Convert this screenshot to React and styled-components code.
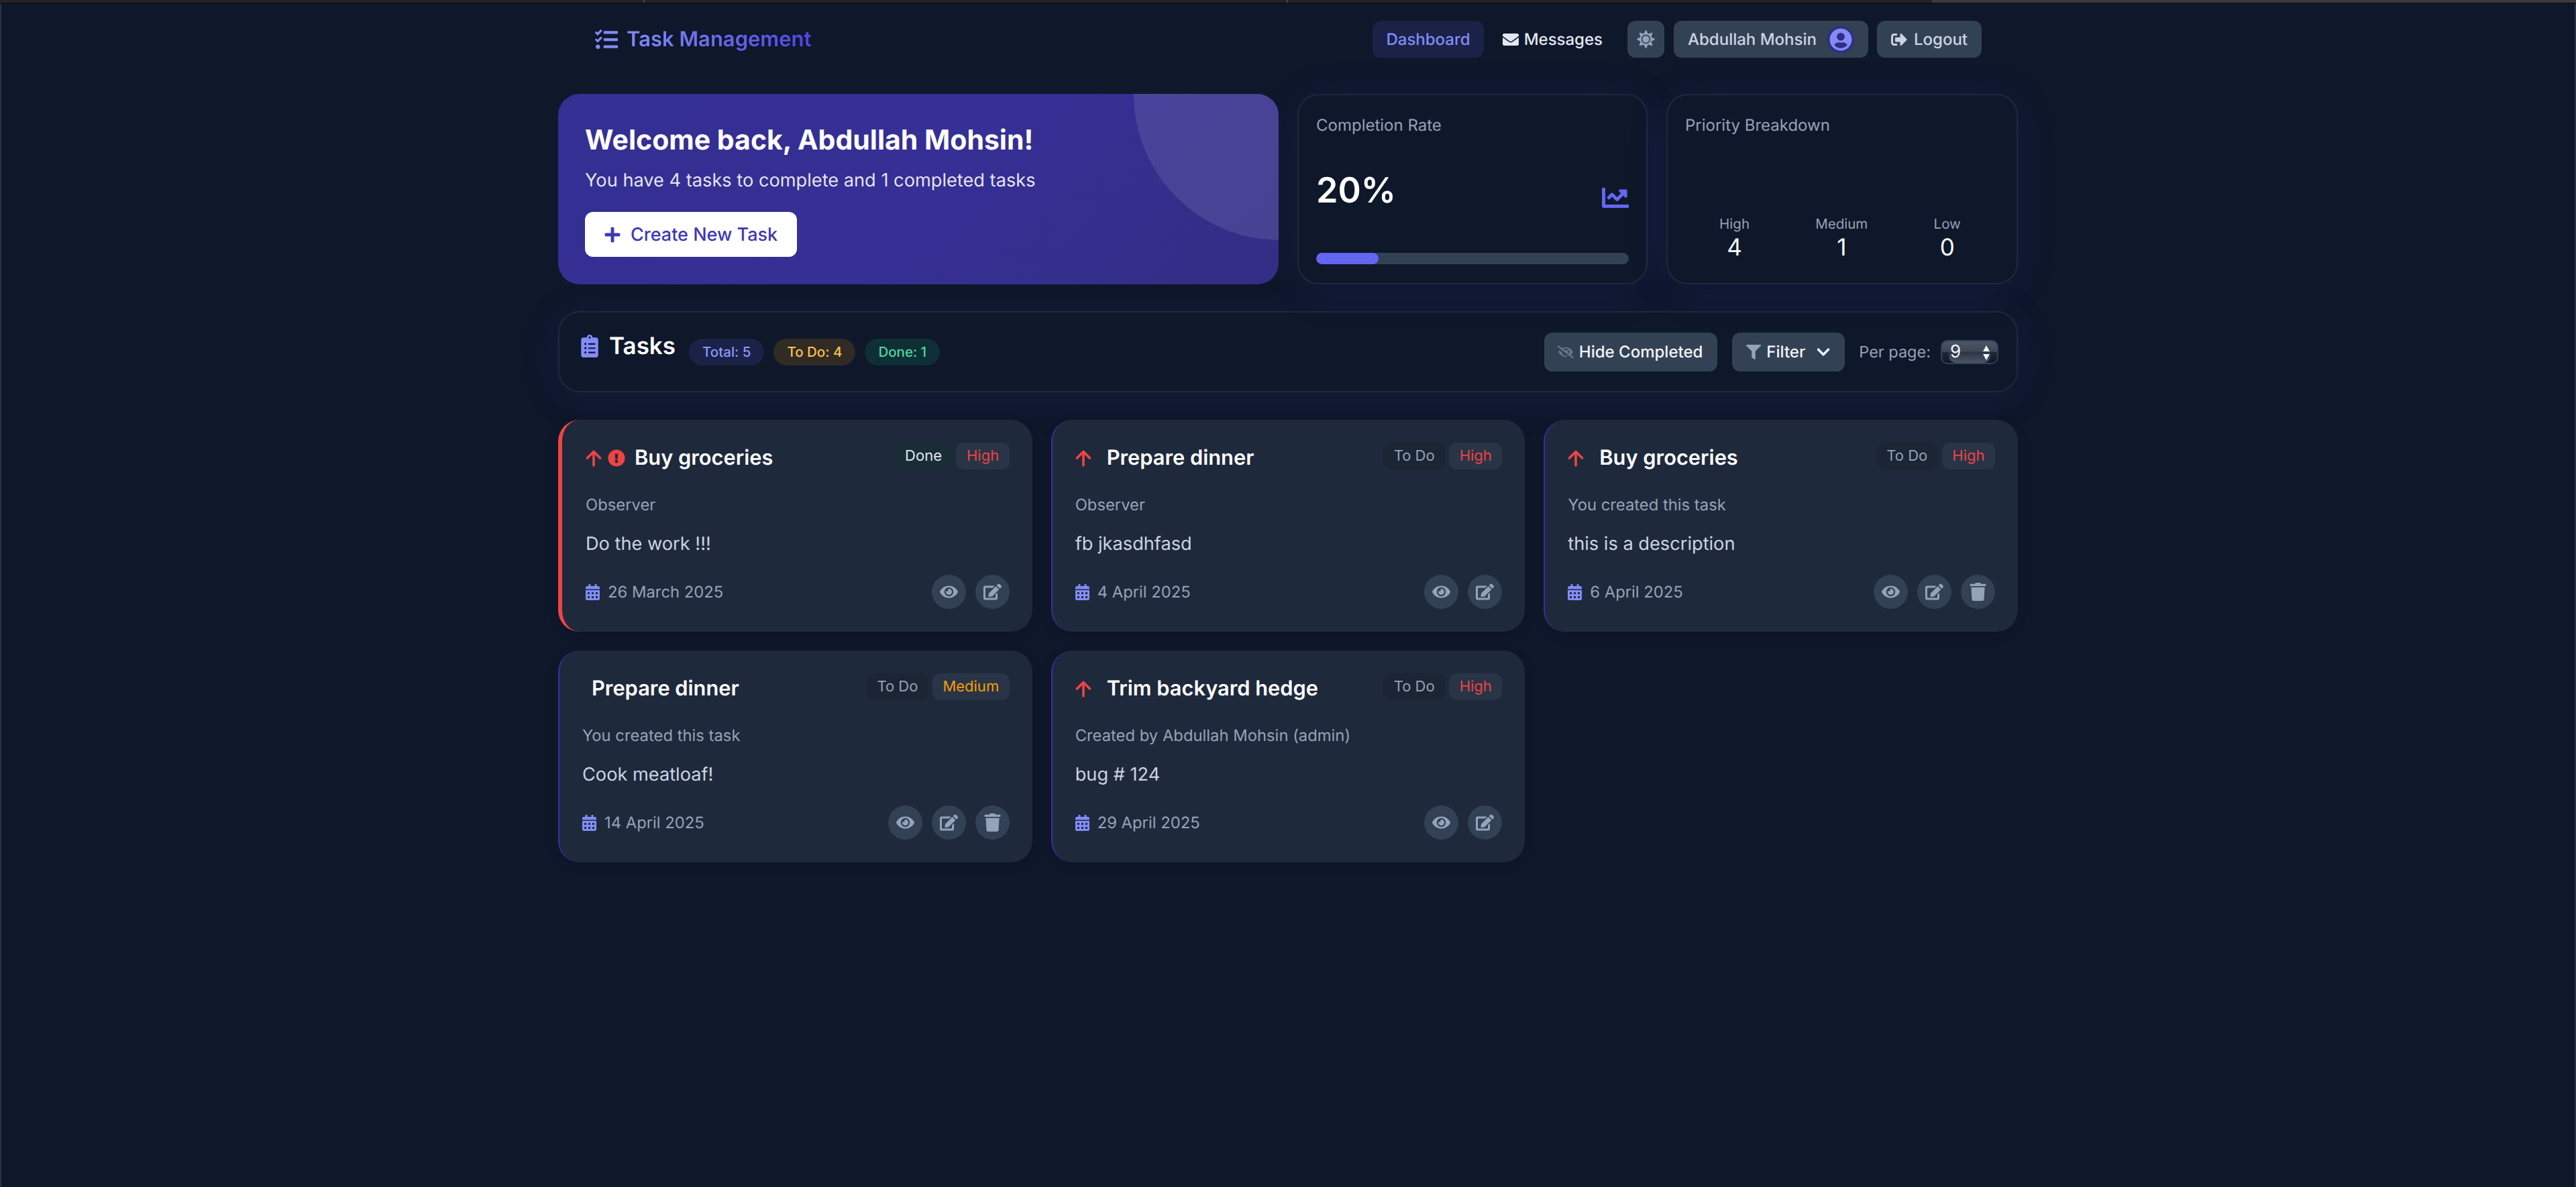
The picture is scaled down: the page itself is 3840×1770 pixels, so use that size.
import React from 'react';
import styled, { createGlobalStyle } from 'styled-components';
import {
  FaTasks, FaEnvelope, FaSun, FaUserCircle, FaSignOutAlt, FaPlus, FaChartLine,
  FaClipboardList, FaEyeSlash, FaFilter, FaChevronDown, FaExclamationCircle,
  FaCalendarAlt, FaEye, FaEdit, FaTrash,
} from 'react-icons/fa';

const Global = createGlobalStyle`
  html, body { margin: 0; padding: 0; background: #0f172a; }
  body { font-family: Inter, "Noto Sans", "Liberation Sans", sans-serif; color: #f8fafc; -webkit-font-smoothing: antialiased; text-rendering: geometricPrecision; }
  * { box-sizing: border-box; }
`;

const Page = styled.div`
  min-height: 1770px;
  background: #0f172a;
  border-left: 2px solid #2a3140;
  border-right: 2px solid #2a3140;
  display: flex;
  flex-direction: column;
`;
const Strip = styled.div`
  height: 4px;
  background: linear-gradient(90deg, #242424 0 959px, #4a4a4a 959px 961px, #242424 961px 1918px, #4a4a4a 1918px 1920px, #242424 1920px 2880px, #3a3a3a 2880px);
  margin: 0 -2px;
  box-shadow: 0 1px 1px #0a0a0a;
`;
const Container = styled.div`
  width: 2176px;
  margin-left: 830px;
`;
const Nav = styled.nav`
  display: flex;
  align-items: center;
  justify-content: space-between;
  padding: 27px 54px 54px 55px;
`;
const Brand = styled.div`
  display: flex;
  align-items: center;
  gap: 13px;
  color: #818cf8;
  svg { width: 34px; height: 34px; }
`;
const BrandText = styled.span`
  font-size: 31px;
  font-weight: 600;
  line-height: 40px;
  background: linear-gradient(90deg, #818cf8, #4f46e5);
  -webkit-background-clip: text;
  background-clip: text;
  color: transparent;
`;
const NavRight = styled.div`
  display: flex;
  align-items: center;
`;
const NavLink = styled.div`
  height: 55px;
  display: flex;
  align-items: center;
  gap: 8px;
  padding: 0 20px;
  border-radius: 12px;
  font-size: 24px;
  font-weight: 500;
  color: ${p => (p.$active ? '#818cf8' : '#e2e8f0')};
  background: ${p => (p.$active ? 'rgba(99,102,241,0.15)' : 'transparent')};
  margin-right: ${p => p.$mr || 0}px;
  svg { width: 24px; height: 24px; }
`;
const NavButton = styled.div`
  height: 55px;
  display: flex;
  align-items: center;
  gap: ${p => p.$gap || 8}px;
  padding: 0 ${p => p.$pad || 20}px;
  border-radius: 12px;
  background: #334155;
  font-size: 24px;
  font-weight: 500;
  color: #cbd5e1;
  margin-right: ${p => p.$mr || 0}px;
`;
const ThemeIcon = styled(FaSun)`
  width: 27px;
  height: 27px;
  color: #94a3b8;
`;
const Avatar = styled.span`
  width: 40px;
  height: 40px;
  border-radius: 50%;
  background: #312e81;
  display: flex;
  align-items: center;
  justify-content: center;
  svg { width: 34px; height: 34px; color: #818cf8; background: #312e81; border-radius: 50%; }
`;

const TopGrid = styled.section`
  display: grid;
  grid-template-columns: 1074px 522px 524px;
  gap: 28px;
  height: 284px;
`;
const Hero = styled.div`
  position: relative;
  overflow: hidden;
  border-radius: 32px;
  padding: 40px;
  background: linear-gradient(135deg, #342f92, #362f95 50%, #332e85);
  &::after {
    content: '';
    position: absolute;
    width: 436px;
    height: 436px;
    top: -218px;
    right: -220px;
    border-radius: 50%;
    background: rgba(255,255,255,0.1);
  }
`;
const HeroTitle = styled.h1`
  margin: 0 0 14px;
  font-size: 41px;
  line-height: 56px;
  font-weight: 700;
  color: #fff;
`;
const HeroText = styled.p`
  margin: 0 0 28px;
  font-size: 27.2px;
  line-height: 38px;
  color: rgba(255,255,255,0.88);
`;
const CreateButton = styled.div`
  display: inline-flex;
  align-items: center;
  gap: 14px;
  height: 67px;
  padding: 0 29px 0 28px;
  border-radius: 12px;
  background: #fff;
  color: #3f38b5;
  font-size: 27px;
  font-weight: 500;
  svg { width: 26px; height: 26px; }
`;
const Stat = styled.div`
  display: flex;
  flex-direction: column;
  border: 2px solid #1e293b;
  border-radius: 32px;
  background: #0f172a;
  padding: 26px 26px 28px;
  box-shadow: 0 8px 64px rgba(79,70,229,0.1);
`;
const StatLabel = styled.div`
  font-size: 24px;
  line-height: 38px;
  font-weight: 400;
  color: #94a3b8;
`;
const RateRow = styled.div`
  display: flex;
  justify-content: space-between;
  align-items: flex-end;
  margin-top: 47px;
`;
const RateValue = styled.div`
  font-size: 52px;
  line-height: 62px;
  font-weight: 600;
  color: #fff;
`;
const RateIcon = styled(FaChartLine)`
  width: 40px;
  height: 40px;
  color: #6366f1;
`;
const Track = styled.div`
  margin-top: auto;
  height: 17px;
  border-radius: 9px;
  background: #334155;
  overflow: hidden;
`;
const Fill = styled.div`
  height: 100%;
  background: #6366f1;
  border-radius: 9px;
`;
const PriorityRow = styled.div`
  margin-top: auto;
  margin-bottom: 3px;
  padding: 0 8px 0 2px;
  display: flex;
  justify-content: space-around;
  text-align: center;
`;
const PriorityLabel = styled.div`
  font-size: 20.5px;
  line-height: 24px;
  color: #94a3b8;
`;
const PriorityValue = styled.div`
  margin-top: 2px;
  font-size: 35px;
  line-height: 43px;
  font-weight: 400;
  color: #f8fafc;
`;

const TasksHeader = styled.section`
  margin: 40px 0 41px;
  height: 121px;
  border: 2px solid #1e293b;
  border-radius: 32px;
  background: #0f172a;
  padding: 0 27px 0 32px;
  display: flex;
  align-items: center;
  justify-content: space-between;
  box-shadow: 0 8px 64px rgba(79,70,229,0.1);
`;
const HeaderLeft = styled.div`
  display: flex;
  align-items: center;
`;
const TasksTitle = styled.h2`
  margin: 0 20px 18px 0;
  display: flex;
  align-items: center;
  gap: 16px;
  font-size: 35px;
  line-height: 44px;
  font-weight: 600;
  color: #fff;
  svg { width: 26px; height: 34px; color: #818cf8; }
`;
const Chips = styled.div`
  display: flex;
  gap: 14px;
`;
const Chip = styled.span`
  height: 40px;
  display: inline-flex;
  align-items: center;
  padding: 0 20px;
  border-radius: 20px;
  font-size: 20.5px;
  font-weight: 500;
  color: ${p => p.$fg};
  background: ${p => p.$bg};
`;
const HeaderRight = styled.div`
  display: flex;
  align-items: center;
`;
const Control = styled.div`
  height: 58px;
  display: flex;
  align-items: center;
  gap: 8px;
  padding: 0 ${p => p.$padRight || 20}px 0 ${p => p.$padLeft || 20}px;
  border-radius: 12px;
  background: #334155;
  color: #f1f5f9;
  font-size: 24px;
  font-weight: 500;
  margin-right: ${p => p.$mr || 0}px;
`;
const DimEye = styled(FaEyeSlash)`
  width: 24px;
  height: 24px;
  color: #64748b;
`;
const FilterIcon = styled(FaFilter)`
  width: 22px;
  height: 24px;
  color: #94a3b8;
`;
const Chevron = styled(FaChevronDown)`
  width: 22px;
  height: 22px;
  margin-left: 8px;
`;
const PerLabel = styled.span`
  font-size: 23.5px;
  color: #94a3b8;
  margin-right: 15px;
`;
const Spinner = styled.div`
  position: relative;
  width: 86px;
  height: 36px;
  border-radius: 10px;
  border: 2px solid #334155;
  background: linear-gradient(180deg, #4b5563 0, #3d4757 48%, #1f2937 50%, #0f172a 100%);
  overflow: hidden;
  font-size: 26px;
  line-height: 32px;
  padding-left: 12px;
  color: #f1f5f9;
  &::before {
    content: '';
    position: absolute;
    left: 10px;
    right: 10px;
    bottom: 0;
    height: 16px;
    border-radius: 0 0 10px 10px;
    background: linear-gradient(180deg, #2b3546, #4b5563);
  }
`;
const SpinnerValue = styled.span`
  position: relative;
`;
const Arrows = styled.svg`
  position: absolute;
  right: 10px;
  top: 6px;
  width: 12px;
  height: 22px;
`;

const Grid = styled.section`
  display: grid;
  grid-template-columns: repeat(3, 706.67px);
  gap: 28px;
`;
const Card = styled.article`
  height: 316px;
  border-radius: 32px;
  background: #1e293b;
  border-left: ${p => (p.$overdue ? '6px solid #ef4444' : '2px solid #3730a3')};
  padding: 34px 34px 34px ${p => (p.$overdue ? 35 : 34)}px;
  display: flex;
  flex-direction: column;
  box-shadow: 0 4px 16px rgba(0,0,0,0.12);
`;
const CardHead = styled.div`
  display: flex;
  justify-content: space-between;
  align-items: flex-start;
  height: 46px;
`;
const TitleRow = styled.div`
  display: flex;
  align-items: center;
  height: 46px;
`;
const UpArrow = styled.svg`
  width: 24px;
  height: 25px;
  margin-right: 9px;
  color: #ef4444;
`;
const Alert = styled(FaExclamationCircle)`
  width: 26px;
  height: 26px;
  color: #ef4444;
`;
const CardTitle = styled.h3`
  margin: 0 0 0 14px;
  font-size: 30.8px;
  line-height: 46px;
  font-weight: 600;
  color: #fff;
`;
const Badges = styled.div`
  display: flex;
  gap: 6px;
`;
const Badge = styled.span`
  height: 40px;
  display: inline-flex;
  align-items: center;
  padding: 0 15.5px;
  border-radius: 12px;
  font-size: 22px;
  font-weight: 400;
  color: ${p => p.$fg};
  background: ${p => p.$bg};
`;
const Meta = styled.div`
  margin-top: 31px;
  font-size: 23.8px;
  line-height: 32px;
  color: #94a3b8;
`;
const Desc = styled.p`
  margin: 25px 0 0;
  font-size: 27.2px;
  line-height: 34px;
  color: #cbd5e1;
`;
const CardFoot = styled.div`
  margin-top: auto;
  display: flex;
  align-items: center;
  justify-content: space-between;
`;
const DateWrap = styled.div`
  display: flex;
  align-items: center;
  gap: 12px;
  font-size: 23.8px;
  color: #94a3b8;
  svg { width: 21px; height: 24px; color: #818cf8; }
`;
const Actions = styled.div`
  display: flex;
  gap: 14px;
`;
const Action = styled.span`
  width: 51px;
  height: 51px;
  border-radius: 50%;
  background: #334155;
  color: #94a3b8;
  display: flex;
  align-items: center;
  justify-content: center;
  svg { width: 27px; height: 27px; }
`;

const ArrowUp = () => (
  <UpArrow viewBox="0 0 24 25" fill="none" stroke="currentColor" strokeWidth="3.6" strokeLinecap="round" strokeLinejoin="round">
    <path d="M2.5 12L12 2.5l9.5 9.5" />
    <path d="M12 3v20" />
  </UpArrow>
);

const tasks = [
  { title: 'Buy groceries', status: 'Done', priority: 'High', meta: 'Observer', desc: 'Do the work !!!', date: '26 March 2025', overdue: true, arrow: true },
  { title: 'Prepare dinner', status: 'To Do', priority: 'High', meta: 'Observer', desc: 'fb jkasdhfasd', date: '4 April 2025', arrow: true },
  { title: 'Buy groceries', status: 'To Do', priority: 'High', meta: 'You created this task', desc: 'this is a description', date: '6 April 2025', arrow: true, trash: true },
  { title: 'Prepare dinner', status: 'To Do', priority: 'Medium', meta: 'You created this task', desc: 'Cook meatloaf!', date: '14 April 2025', trash: true },
  { title: 'Trim backyard hedge', status: 'To Do', priority: 'High', meta: 'Created by Abdullah Mohsin (admin)', desc: 'bug # 124', date: '29 April 2025', arrow: true },
];

const TaskCard = ({ t }) => (
  <Card $overdue={t.overdue}>
    <CardHead>
      <TitleRow>
        {t.arrow && <ArrowUp />}
        {t.overdue && <Alert />}
        <CardTitle>{t.title}</CardTitle>
      </TitleRow>
      <Badges>
        <Badge
          $fg={t.status === 'Done' ? '#e2e8f0' : '#94a3b8'}
          $bg={t.status === 'Done' ? '#1a2d36' : '#1b2534'}
        >{t.status}</Badge>
        <Badge $fg={t.priority === 'High' ? '#ef4444' : '#f59e0b'} $bg="#293446">{t.priority}</Badge>
      </Badges>
    </CardHead>
    <Meta>{t.meta}</Meta>
    <Desc>{t.desc}</Desc>
    <CardFoot>
      <DateWrap><FaCalendarAlt />{t.date}</DateWrap>
      <Actions>
        <Action><FaEye /></Action>
        <Action><FaEdit /></Action>
        {t.trash && <Action><FaTrash /></Action>}
      </Actions>
    </CardFoot>
  </Card>
);

export default function App() {
  return (
    <>
      <Global />
      <Page>
        <Strip />
        <Container>
          <Nav>
            <Brand>
              <FaTasks />
              <BrandText>Task Management</BrandText>
            </Brand>
            <NavRight>
              <NavLink $active $mr={8}>Dashboard</NavLink>
              <NavLink $mr={17}><FaEnvelope />Messages</NavLink>
              <NavButton $pad={14} $mr={14}><ThemeIcon /></NavButton>
              <NavButton $gap={16} $pad={21} $mr={13}>Abdullah Mohsin<Avatar><FaUserCircle /></Avatar></NavButton>
              <NavButton $pad={21} $gap={10}>
                <FaSignOutAlt size={24} />Logout
              </NavButton>
            </NavRight>
          </Nav>

          <TopGrid>
            <Hero>
              <HeroTitle>Welcome back, Abdullah Mohsin!</HeroTitle>
              <HeroText>You have 4 tasks to complete and 1 completed tasks</HeroText>
              <CreateButton><FaPlus />Create New Task</CreateButton>
            </Hero>
            <Stat>
              <StatLabel>Completion Rate</StatLabel>
              <RateRow>
                <RateValue>20%</RateValue>
                <RateIcon />
              </RateRow>
              <Track><Fill style={{ width: '20%' }} /></Track>
            </Stat>
            <Stat>
              <StatLabel>Priority Breakdown</StatLabel>
              <PriorityRow>
                <div><PriorityLabel>High</PriorityLabel><PriorityValue>4</PriorityValue></div>
                <div><PriorityLabel>Medium</PriorityLabel><PriorityValue>1</PriorityValue></div>
                <div><PriorityLabel>Low</PriorityLabel><PriorityValue>0</PriorityValue></div>
              </PriorityRow>
            </Stat>
          </TopGrid>

          <TasksHeader>
            <HeaderLeft>
              <TasksTitle><FaClipboardList />Tasks</TasksTitle>
              <Chips>
                <Chip $fg="#8f98f8" $bg="rgba(99,102,241,0.15)">Total: 5</Chip>
                <Chip $fg="#fcc44a" $bg="rgba(245,158,11,0.15)">To Do: 4</Chip>
                <Chip $fg="#52d6a0" $bg="rgba(16,185,129,0.15)">Done: 1</Chip>
              </Chips>
            </HeaderLeft>
            <HeaderRight>
              <Control $mr={22} $padRight={22}><DimEye />Hide Completed</Control>
              <Control $mr={21} $padLeft={21} $padRight={21}><FilterIcon />Filter<Chevron /></Control>
              <PerLabel>Per page:</PerLabel>
              <Spinner>
                <SpinnerValue>9</SpinnerValue>
                <Arrows viewBox="0 0 12 22" fill="#f1f5f9">
                  <path d="M6 0l5 9H1z" />
                  <path d="M6 22l-5-9h10z" />
                </Arrows>
              </Spinner>
            </HeaderRight>
          </TasksHeader>

          <Grid>
            {tasks.map((t, i) => <TaskCard key={i} t={t} />)}
          </Grid>
        </Container>
      </Page>
    </>
  );
}
